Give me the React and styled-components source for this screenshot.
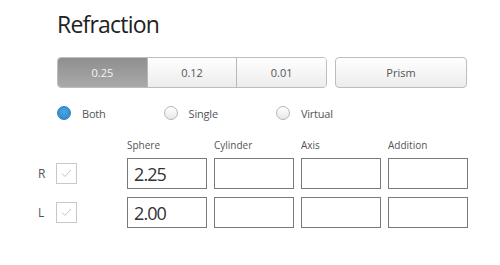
import React, { useState } from "react";
import styled, { createGlobalStyle } from "styled-components";

const GlobalStyle = createGlobalStyle`
  body {
    margin: 0;
    background: #ffffff;
    font-family: "Open Sans", "Noto Sans", sans-serif;
    color: #333;
  }
`;

const steps = ["0.25", "0.12", "0.01"];
const modes = ["Both", "Single", "Virtual"];
const columns = ["Sphere", "Cylinder", "Axis", "Addition"];

export default function App() {
  const [step, setStep] = useState("0.25");
  const [mode, setMode] = useState("Both");
  const [values, setValues] = useState({
    R: ["2.25", "", "", ""],
    L: ["2.00", "", "", ""],
  });

  const valueHandler = (eye, i) => (e) => {
    const next = [...values[eye]];
    next[i] = e.target.value;
    setValues({ ...values, [eye]: next });
  };

  return (
    <Page>
      <GlobalStyle />
      <Title>Refraction</Title>
      <ButtonRow>
        <Segmented>
          {steps.map((s) => (
            <Segment key={s} $active={step === s} onClick={() => setStep(s)}>
              {s}
            </Segment>
          ))}
        </Segmented>
        <PrismButton>Prism</PrismButton>
      </ButtonRow>
      <RadioRow>
        {modes.map((m) => (
          <RadioItem key={m} onClick={() => setMode(m)}>
            <RadioDot $checked={mode === m} />
            <span>{m}</span>
          </RadioItem>
        ))}
      </RadioRow>
      <Grid>
        <span />
        {columns.map((c) => (
          <ColLabel key={c}>{c}</ColLabel>
        ))}
        {["R", "L"].map((eye) => (
          <React.Fragment key={eye}>
            <EyeCell>
              <EyeLabel>{eye}</EyeLabel>
              <CheckBox>
                <svg width="11" height="9" viewBox="0 0 11 9">
                  <path
                    d="M1 4.5 L4 7.5 L10 1"
                    fill="none"
                    stroke="#c4c4c4"
                    strokeWidth="1"
                  />
                </svg>
              </CheckBox>
            </EyeCell>
            {values[eye].map((v, i) => (
              <ValueInput
                key={i}
                value={v}
                onChange={valueHandler(eye, i)}
              />
            ))}
          </React.Fragment>
        ))}
      </Grid>
    </Page>
  );
}

const Page = styled.div`
  width: 500px;
  height: 265px;
  padding: 10px 0 0 57px;
  box-sizing: border-box;
`;

const Title = styled.h1`
  margin: 0;
  font-family: "Open Sans", "Noto Sans", sans-serif;
  font-weight: 400;
  font-size: 23px;
  line-height: 28px;
  color: #222;
  letter-spacing: -0.8px;
`;

const ButtonRow = styled.div`
  display: flex;
  gap: 8px;
  margin-top: 19px;
`;

const Segmented = styled.div`
  display: flex;
  width: 270px;
  height: 31px;
  border: 1px solid #bdbdbd;
  border-radius: 4px;
  overflow: hidden;
  box-sizing: border-box;
`;

const Segment = styled.button`
  flex: 1;
  border: none;
  border-left: 1px solid ${(p) => (p.$active ? "transparent" : "#b8b8b8")};
  &:first-child {
    border-left: none;
  }
  background: ${(p) =>
    p.$active
      ? "linear-gradient(#8f8f8f, #a9a9a9)"
      : "linear-gradient(#ffffff, #ececec)"};
  color: ${(p) => (p.$active ? "#f4f4f4" : "#555")};
  font-family: "Open Sans", "Noto Sans", sans-serif;
  font-size: 11px;
  padding: 0;
  cursor: pointer;
`;

const PrismButton = styled.button`
  width: 132px;
  height: 31px;
  border: 1px solid #bdbdbd;
  border-radius: 4px;
  background: linear-gradient(#ffffff, #ececec);
  color: #555;
  font-family: "Open Sans", "Noto Sans", sans-serif;
  font-size: 11px;
  cursor: pointer;
`;

const RadioRow = styled.div`
  display: flex;
  gap: 58px;
  margin-top: 17px;
  height: 16px;
  align-items: center;
`;

const RadioItem = styled.label`
  display: flex;
  align-items: center;
  gap: 11px;
  font-size: 11px;
  letter-spacing: -0.2px;
  color: #555;
  cursor: pointer;
`;

const RadioDot = styled.span`
  width: 14px;
  height: 14px;
  border-radius: 50%;
  box-sizing: border-box;
  border: 1px solid ${(p) => (p.$checked ? "#2a7fc2" : "#b5b5b5")};
  background: ${(p) =>
    p.$checked
      ? "radial-gradient(circle at 50% 40%, #4ba3e3, #2e86cc)"
      : "linear-gradient(#ffffff, #e8e8e8)"};
`;

const Grid = styled.div`
  display: grid;
  grid-template-columns: 83px repeat(4, 80px);
  column-gap: 7px;
  row-gap: 8px;
  margin: 18px 0 0 -20px;
  align-items: center;
`;

const ColLabel = styled.span`
  font-size: 10px;
  color: #555;
  line-height: 12px;
  margin-bottom: -1px;
`;

const EyeCell = styled.div`
  display: flex;
  align-items: center;
  gap: 10px;
  padding-left: 1px;
`;

const EyeLabel = styled.span`
  font-size: 12px;
  color: #555;
  width: 8px;
`;

const CheckBox = styled.span`
  width: 21px;
  height: 21px;
  box-sizing: border-box;
  border: 1px solid #c8c8c8;
  background: #fff;
  display: flex;
  align-items: center;
  justify-content: center;
`;

const ValueInput = styled.input`
  width: 80px;
  height: 31px;
  box-sizing: border-box;
  border: 1px solid #7a7a7a;
  border-radius: 0;
  padding: 0 0 0 6px;
  font-family: "Open Sans", "Noto Sans", sans-serif;
  font-size: 18px;
  letter-spacing: -0.9px;
  color: #333;
  outline: none;
`;
